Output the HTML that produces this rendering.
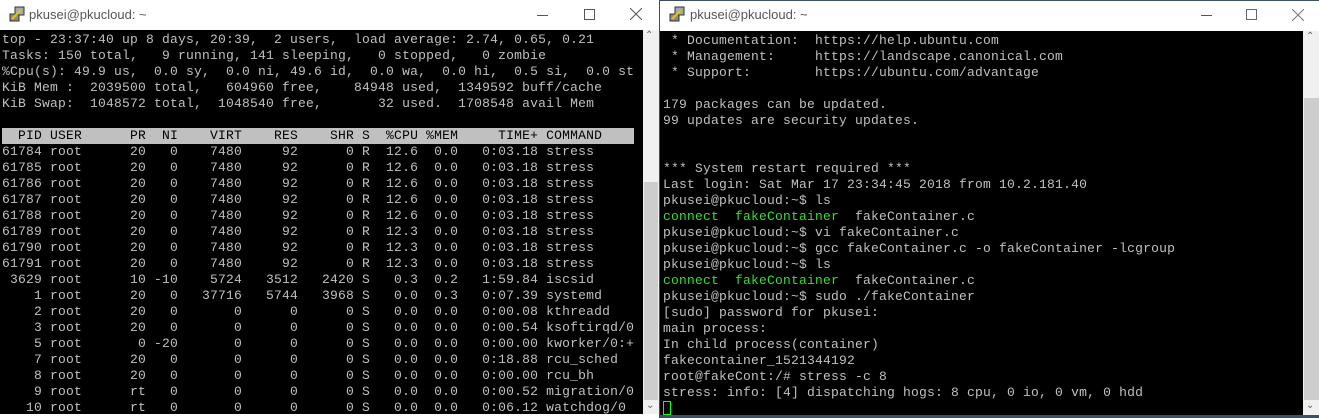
<!DOCTYPE html>
<html><head><meta charset="utf-8"><style>
*{margin:0;padding:0;box-sizing:border-box}
body{width:1319px;height:418px;overflow:hidden;background:#fff;position:relative;font-family:"Liberation Sans",sans-serif}
.abs{position:absolute}
.tb{background:#fff;height:30px}
.title{position:absolute;top:7px;font-size:13px;color:#555}
.term{background:#000;position:absolute}
pre{font-family:"Liberation Mono",monospace;font-size:13px;line-height:16px;letter-spacing:0.2px;color:#c0c0c0;position:absolute;white-space:pre}
.g{color:#2fe02f}
.hl{background:#c0c0c0;color:#000;display:inline-block;width:632px}
.sb{position:absolute;background:#f0f0f0}
.th{position:absolute;background:#cdcdcd}
.ctl{position:absolute;color:#666;font-size:16px}
</style></head><body>
<div class="abs tb" style="left:0;top:0;width:659px"></div>
<svg class="abs" style="left:9px;top:6px" width="16" height="16" viewBox="0 0 16 16"><rect x="1" y="8" width="9" height="7" fill="#888" stroke="#333"/><rect x="6" y="1" width="9" height="8" fill="#9ab" stroke="#333"/><path d="M3 13 L12 4" stroke="#e8c000" stroke-width="2.5"/></svg>
<div class="title" style="left:29px">pkusei@pkucloud: ~</div>
<div class="abs" style="left:537px;top:15px;width:11px;height:1px;background:#555"></div>
<div class="abs" style="left:584px;top:9px;width:11px;height:11px;border:1px solid #555"></div>
<svg class="abs" style="left:630px;top:8px" width="12" height="12"><path d="M0 0L12 12M12 0L0 12" stroke="#555"/></svg>
<div class="term" style="left:0;top:30px;width:643px;height:384px"></div>
<div class="sb" style="left:643px;top:30px;width:16px;height:384px"></div>
<div class="th" style="left:644px;top:182px;width:14px;height:218px"></div>
<div class="ctl" style="left:645px;top:30px;font-size:10px">&#8963;</div>
<div class="ctl" style="left:646px;top:400px;font-size:10px">&#8964;</div>
<pre style="left:2px;top:32px">top - 23:37:40 up 8 days, 20:39,  2 users,  load average: 2.74, 0.65, 0.21
Tasks: 150 total,   9 running, 141 sleeping,   0 stopped,   0 zombie
%Cpu(s): 49.9 us,  0.0 sy,  0.0 ni, 49.6 id,  0.0 wa,  0.0 hi,  0.5 si,  0.0 st
KiB Mem :  2039500 total,   604960 free,    84948 used,  1349592 buff/cache
KiB Swap:  1048572 total,  1048540 free,       32 used.  1708548 avail Mem

<span class="hl">  PID USER      PR  NI    VIRT    RES    SHR S  %CPU %MEM     TIME+ COMMAND</span>
61784 root      20   0    7480     92      0 R  12.6  0.0   0:03.18 stress
61785 root      20   0    7480     92      0 R  12.6  0.0   0:03.18 stress
61786 root      20   0    7480     92      0 R  12.6  0.0   0:03.18 stress
61787 root      20   0    7480     92      0 R  12.6  0.0   0:03.18 stress
61788 root      20   0    7480     92      0 R  12.6  0.0   0:03.18 stress
61789 root      20   0    7480     92      0 R  12.3  0.0   0:03.18 stress
61790 root      20   0    7480     92      0 R  12.3  0.0   0:03.18 stress
61791 root      20   0    7480     92      0 R  12.3  0.0   0:03.18 stress
 3629 root      10 -10    5724   3512   2420 S   0.3  0.2   1:59.84 iscsid
    1 root      20   0   37716   5744   3968 S   0.0  0.3   0:07.39 systemd
    2 root      20   0       0      0      0 S   0.0  0.0   0:00.08 kthreadd
    3 root      20   0       0      0      0 S   0.0  0.0   0:00.54 ksoftirqd/0
    5 root       0 -20       0      0      0 S   0.0  0.0   0:00.00 kworker/0:+
    7 root      20   0       0      0      0 S   0.0  0.0   0:18.88 rcu_sched
    8 root      20   0       0      0      0 S   0.0  0.0   0:00.00 rcu_bh
    9 root      rt   0       0      0      0 S   0.0  0.0   0:00.52 migration/0
   10 root      rt   0       0      0      0 S   0.0  0.0   0:06.12 watchdog/0</pre>
<div class="abs" style="left:659px;top:0;width:660px;height:418px;background:#3b5068"></div>
<div class="abs tb" style="left:660px;top:1px;width:659px;height:30px"></div>
<svg class="abs" style="left:669px;top:6px" width="16" height="16" viewBox="0 0 16 16"><rect x="1" y="8" width="9" height="7" fill="#888" stroke="#333"/><rect x="6" y="1" width="9" height="8" fill="#9ab" stroke="#333"/><path d="M3 13 L12 4" stroke="#e8c000" stroke-width="2.5"/></svg>
<div class="title" style="left:690px">pkusei@pkucloud: ~</div>
<div class="abs" style="left:1201px;top:15px;width:11px;height:1px;background:#555"></div>
<div class="abs" style="left:1246px;top:9px;width:11px;height:11px;border:1px solid #666"></div>
<svg class="abs" style="left:1292px;top:9px" width="12" height="12"><path d="M0 0L12 12M12 0L0 12" stroke="#777"/></svg>
<div class="term" style="left:660px;top:31px;width:643px;height:384px"></div>
<div class="sb" style="left:1303px;top:31px;width:16px;height:384px"></div>
<div class="th" style="left:1304px;top:98px;width:15px;height:302px"></div>
<div class="ctl" style="left:1306px;top:31px;font-size:10px">&#8963;</div>
<div class="ctl" style="left:1306px;top:400px;font-size:10px">&#8964;</div>
<pre style="left:663px;top:33px"> * Documentation:  https://help.ubuntu.com
 * Management:     https://landscape.canonical.com
 * Support:        https://ubuntu.com/advantage

179 packages can be updated.
99 updates are security updates.


*** System restart required ***
Last login: Sat Mar 17 23:34:45 2018 from 10.2.181.40
pkusei@pkucloud:~$ ls
<span class="g">connect  fakeContainer</span>  fakeContainer.c
pkusei@pkucloud:~$ vi fakeContainer.c
pkusei@pkucloud:~$ gcc fakeContainer.c -o fakeContainer -lcgroup
pkusei@pkucloud:~$ ls
<span class="g">connect  fakeContainer</span>  fakeContainer.c
pkusei@pkucloud:~$ sudo ./fakeContainer
[sudo] password for pkusei:
main process:
In child process(container)
fakecontainer_1521344192
root@fakeCont:/# stress -c 8
stress: info: [4] dispatching hogs: 8 cpu, 0 io, 0 vm, 0 hdd</pre>
<div class="abs" style="left:663px;top:401px;width:8px;height:14px;border:1px solid #1f1"></div>
</body></html>
